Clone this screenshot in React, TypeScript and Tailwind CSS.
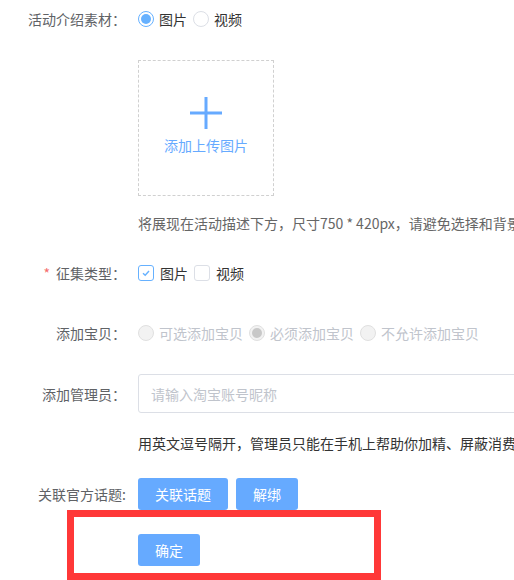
import React from "react";

const font = { fontFamily: '"Noto Sans CJK SC", "Noto Sans", sans-serif' };

function Radio({ checked, disabled, label }: { checked?: boolean; disabled?: boolean; label: string }) {
  return (
    <label className="flex items-center gap-[5px] mr-[6px]">
      <span
        className={
          "w-4 h-4 rounded-full border flex items-center justify-center " +
          (disabled
            ? "border-[#e0e0e0] bg-[#f2f2f2]"
            : checked
            ? "border-[#66b1ff] bg-white"
            : "border-[#dcdfe6] bg-white")
        }
      >
        {checked && (
          <span className={"w-[10px] h-[10px] rounded-full " + (disabled ? "bg-[#c8c8c8]" : "bg-[#66b1ff]")} />
        )}
      </span>
      <span className={disabled ? "text-[#c0c4cc]" : "text-[#333]"}>{label}</span>
    </label>
  );
}

function Checkbox({ checked, label }: { checked?: boolean; label: string }) {
  return (
    <label className="flex items-center gap-[6px] mr-[6px]">
      <span
        className={
          "w-4 h-4 rounded-[3px] border flex items-center justify-center bg-white " +
          (checked ? "border-[#66b1ff]" : "border-[#dcdfe6]")
        }
      >
        {checked && (
          <svg width="10" height="10" viewBox="0 0 10 10">
            <path d="M2 5.2 L4.2 7.3 L8 3" fill="none" stroke="#66b1ff" strokeWidth="1.4" />
          </svg>
        )}
      </span>
      <span className="text-[#333]">{label}</span>
    </label>
  );
}

function Label({ children, required }: { children: React.ReactNode; required?: boolean }) {
  return (
    <div className="w-[126px] shrink-0 text-right pr-0 text-[#606266]">
      {required && <span className="text-[#f56c6c] mr-[6px]">*</span>}
      {children}
    </div>
  );
}

export default function App() {
  return (
    <div className="relative w-[514px] h-[580px] bg-white overflow-hidden text-[14px] leading-[20px]" style={font}>
      <div className="flex items-center h-[38px]">
        <Label>活动介绍素材：</Label>
        <div className="flex items-center ml-[12px]">
          <Radio checked label="图片" />
          <Radio label="视频" />
        </div>
      </div>

      <div className="ml-[138px] mt-[22px] w-[136px] h-[136px] border border-dashed border-[#d0d0d0] flex flex-col items-center">
        <svg width="32" height="32" viewBox="0 0 32 32" className="mt-[36px]">
          <path d="M16 0 V32 M0 16 H32" stroke="#66aaff" strokeWidth="3" />
        </svg>
        <div className="mt-[6px] text-[#66aaff] whitespace-nowrap">添加上传图片</div>
      </div>

      <div className="ml-[138px] mt-[17px] text-[#666] whitespace-nowrap">
        将展现在活动描述下方，尺寸750 * 420px，请避免选择和背景色相近的图片
      </div>

      <div className="flex items-center h-[40px] mt-[20px]">
        <Label required>征集类型：</Label>
        <div className="flex items-center ml-[12px]">
          <Checkbox checked label="图片" />
          <Checkbox label="视频" />
        </div>
      </div>

      <div className="flex items-center h-[40px] mt-[20px]">
        <Label>添加宝贝：</Label>
        <div className="flex items-center ml-[12px]">
          <Radio disabled label="可选添加宝贝" />
          <Radio disabled checked label="必须添加宝贝" />
          <Radio disabled label="不允许添加宝贝" />
        </div>
      </div>

      <div className="flex items-center mt-[21px]">
        <Label>添加管理员：</Label>
        <div className="ml-[12px] w-[420px] shrink-0 h-[39px] border border-[#dcdfe6] rounded-[3px] flex items-center px-[12px] text-[#c0c4cc]">
          请输入淘宝账号昵称
        </div>
      </div>

      <div className="ml-[138px] mt-[20px] text-[#333] whitespace-nowrap">
        用英文逗号隔开，管理员只能在手机上帮助你加精、屏蔽消费者的内容
      </div>

      <div className="flex items-center mt-[25px] h-[32px]">
        <Label>关联官方话题:</Label>
        <div className="flex items-center ml-[12px] gap-[8px]">
          <button className="h-[32px] w-[90px] rounded-[3px] bg-[#66aaff] text-white">关联话题</button>
          <button className="h-[32px] w-[62px] rounded-[3px] bg-[#66aaff] text-white">解绑</button>
        </div>
      </div>

      <div className="ml-[138px] mt-[24px]">
        <button className="h-[32px] w-[62px] rounded-[3px] bg-[#66aaff] text-white">确定</button>
      </div>

      <div className="absolute left-[67px] top-[510px] w-[314px] h-[70px] border-[7px] border-[#ff3838]" />
    </div>
  );
}
